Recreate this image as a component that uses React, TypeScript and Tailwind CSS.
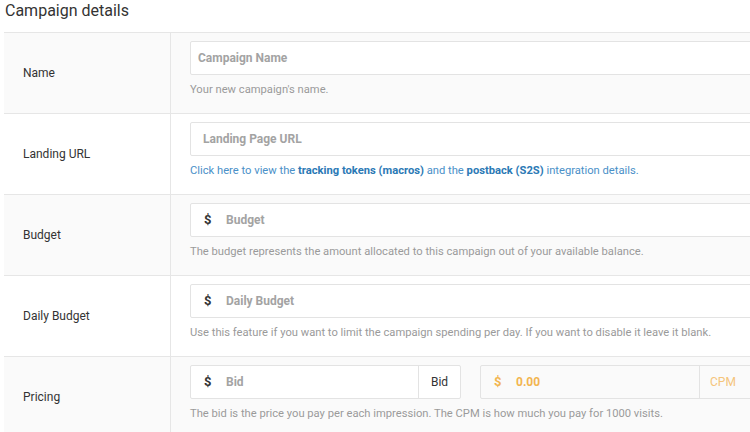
import React from "react";

function Row({
  label,
  shade,
  children,
}: {
  label: string;
  shade?: boolean;
  children: React.ReactNode;
}) {
  return (
    <div className={`flex h-[81px] border-b border-[#e6e6e6] ${shade ? "bg-[#fafafa]" : "bg-white"}`}>
      <div className="w-[167px] shrink-0 border-r border-[#e6e6e6] pl-[19px] flex items-center text-[12px] text-[#333]">
        {label}
      </div>
      <div className="flex-1 pl-[19px] pt-[8px]">{children}</div>
    </div>
  );
}

function Field({ placeholder, dollar, pad = "pl-[11px]" }: { placeholder: string; dollar?: boolean; pad?: string }) {
  return (
    <div className="h-[34px] border border-[#e3e3e3] rounded-[2px] bg-white flex items-center text-[12px] font-bold">
      {dollar && <span className="pl-[13px] w-[35px] text-[13px] text-[#333]">$</span>}
      <span className={`text-[#a3a3a3] ${dollar ? "" : pad}`}>{placeholder}</span>
    </div>
  );
}

function Help({ children }: { children: React.ReactNode }) {
  return <div className="mt-[8px] text-[11.2px] leading-[14px] text-[#9a9a9a]">{children}</div>;
}

export default function App() {
  return (
    <div className="w-[750px] h-[432px] overflow-hidden bg-white" style={{ fontFamily: "Roboto, 'Liberation Sans', sans-serif" }}>
      <div className="w-[800px]">
        <div className="h-[32px] pl-[5px] pt-[1px] text-[16px] leading-[20px] text-[#333]">Campaign details</div>
        <div className="ml-[4px] border-t border-[#e6e6e6]">
          <Row label="Name" shade>
            <Field placeholder="Campaign Name" pad="pl-[7px]" />
            <Help>Your new campaign's name.</Help>
          </Row>
          <Row label="Landing URL">
            <Field placeholder="Landing Page URL" pad="pl-[12px]" />
            <div className="mt-[8px] text-[11.2px] leading-[14px] text-[#4a90c8]">
              Click here to view the <b className="text-[#2b79b5]">tracking tokens (macros)</b> and the{" "}
              <b className="text-[#2b79b5]">postback (S2S)</b> integration details.
            </div>
          </Row>
          <Row label="Budget" shade>
            <Field placeholder="Budget" dollar />
            <Help>The budget represents the amount allocated to this campaign out of your available balance.</Help>
          </Row>
          <Row label="Daily Budget">
            <Field placeholder="Daily Budget" dollar />
            <Help>Use this feature if you want to limit the campaign spending per day. If you want to disable it leave it blank.</Help>
          </Row>
          <Row label="Pricing" shade>
            <div className="flex gap-[19px]">
              <div className="w-[271px] h-[34px] flex border border-[#e3e3e3] rounded-[2px] bg-white text-[12px]">
                <div className="flex-1 flex items-center font-bold">
                  <span className="pl-[13px] w-[35px] text-[13px] text-[#333]">$</span>
                  <span className="text-[#a3a3a3]">Bid</span>
                </div>
                <div className="w-[42px] border-l border-[#e3e3e3] flex items-center justify-center text-[#333]">Bid</div>
              </div>
              <div className="w-[280px] h-[34px] flex border border-[#e3e3e3] rounded-[2px] bg-[#fafafa] text-[12px]">
                <div className="flex-1 flex items-center font-bold">
                  <span className="pl-[13px] w-[35px] text-[13px] text-[#f2b550]">$</span>
                  <span className="text-[#f2b550]">0.00</span>
                </div>
                <div className="w-[60px] border-l border-[#e3e3e3] flex items-center pl-[10px] text-[#f5c57c]">CPM</div>
              </div>
            </div>
            <Help>The bid is the price you pay per each impression. The CPM is how much you pay for 1000 visits.</Help>
          </Row>
        </div>
      </div>
    </div>
  );
}
